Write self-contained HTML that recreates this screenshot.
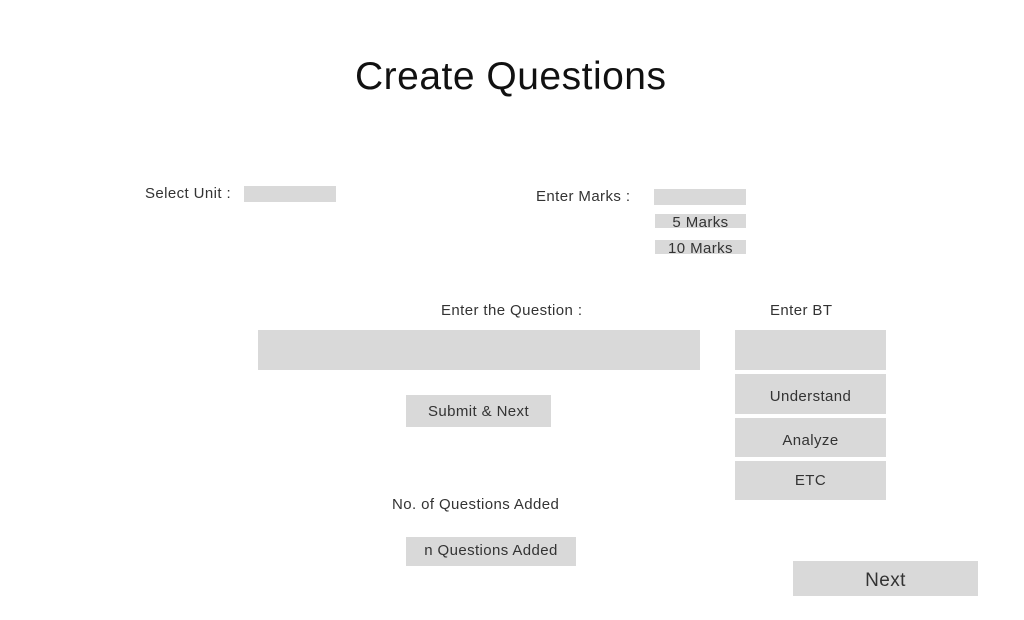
<!DOCTYPE html>
<html><head><style>
body{margin:0;width:1024px;height:620px;background:#fff;position:relative;font-family:"Liberation Sans",sans-serif;color:#333;overflow:hidden}
.a{position:absolute;white-space:nowrap;letter-spacing:0.4px}
.b{position:absolute;background:#d9d9d9;text-align:center;white-space:nowrap;letter-spacing:0.4px}
</style></head><body>
<div class="a" style="left:355px;top:55px;font-size:39px;color:#111;letter-spacing:0.5px">Create Questions</div>
<div class="a" style="left:145px;top:185px;font-size:15px">Select Unit :</div>
<div class="b" style="left:244px;top:186px;width:92px;height:16px"></div>
<div class="a" style="left:536px;top:188px;font-size:15px">Enter Marks :</div>
<div class="b" style="left:654px;top:189px;width:92px;height:16px"></div>
<div class="b" style="left:655px;top:214px;width:91px;height:14px;font-size:15px;line-height:17px">5 Marks</div>
<div class="b" style="left:655px;top:240px;width:91px;height:14px;font-size:15px;line-height:17px;overflow:hidden">10 Marks</div>
<div class="a" style="left:441px;top:302px;font-size:15px">Enter the Question :</div>
<div class="a" style="left:770px;top:302px;font-size:15px">Enter BT</div>
<div class="b" style="left:258px;top:330px;width:442px;height:40px"></div>
<div class="b" style="left:735px;top:330px;width:151px;height:40px"></div>
<div class="b" style="left:735px;top:374px;width:151px;height:40px;font-size:15px;line-height:46px">Understand</div>
<div class="b" style="left:735px;top:418px;width:151px;height:39px;font-size:15px;line-height:46px">Analyze</div>
<div class="b" style="left:735px;top:461px;width:151px;height:39px;font-size:15px;line-height:40px">ETC</div>
<div class="b" style="left:406px;top:395px;width:145px;height:32px;font-size:15px;line-height:34px">Submit &amp; Next</div>
<div class="a" style="left:392px;top:496px;font-size:15px">No. of Questions Added</div>
<div class="b" style="left:406px;top:537px;width:170px;height:29px;font-size:15px;line-height:28px">n Questions Added</div>
<div class="b" style="left:793px;top:561px;width:185px;height:35px;font-size:19px;line-height:40px">Next</div>
</body></html>
